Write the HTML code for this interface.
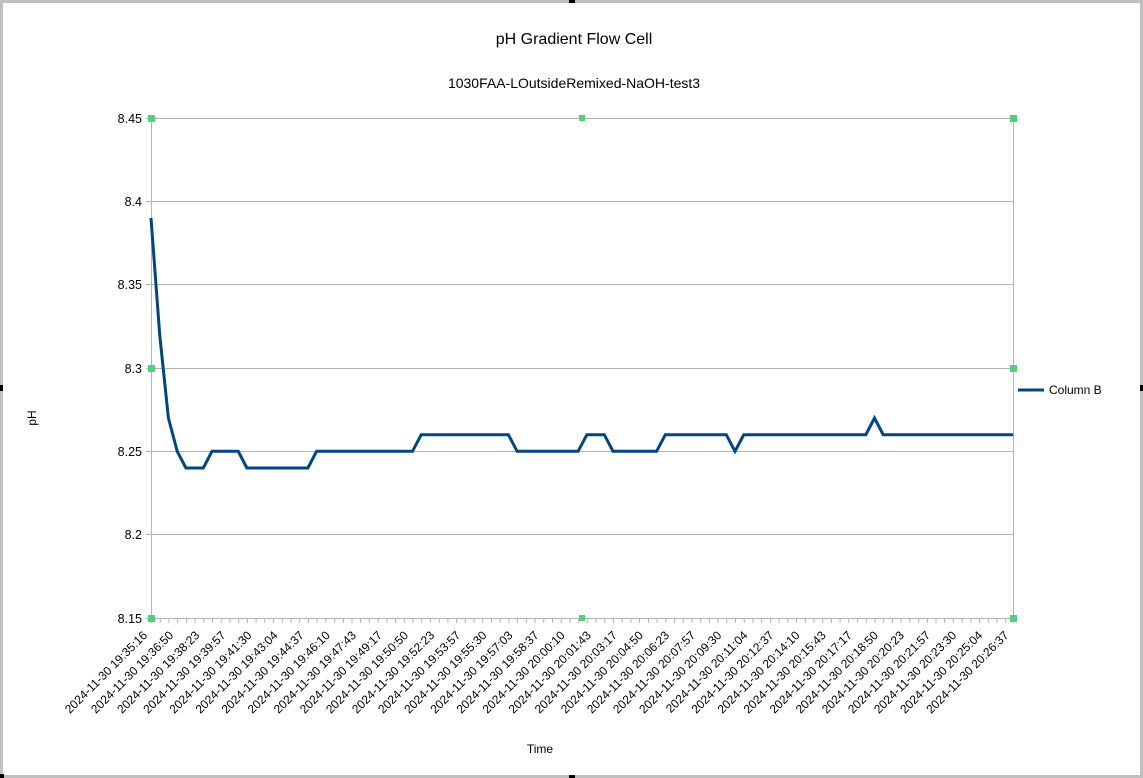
<!DOCTYPE html>
<html><head><meta charset="utf-8"><style>
html,body{margin:0;padding:0;background:#fff;}
svg{display:block;font-family:"Liberation Sans",sans-serif;}
</style></head><body>
<svg width="1143" height="778" viewBox="0 0 1143 778" xmlns="http://www.w3.org/2000/svg">
<rect x="0" y="0" width="1143" height="778" fill="#fff"/>
<rect x="1.5" y="1.5" width="1140" height="775" fill="none" stroke="#c0c0c0" stroke-width="3"/>
<rect x="0" y="385" width="3" height="6" fill="#000"/>
<rect x="1140" y="385" width="3" height="6" fill="#000"/>
<rect x="569" y="0" width="6" height="3" fill="#000"/>
<rect x="569" y="775" width="6" height="3" fill="#000"/>
<rect x="0" y="774" width="4" height="4" fill="#000"/>
<text x="574" y="44" font-size="16" text-anchor="middle" fill="#000">pH Gradient Flow Cell</text>
<text x="574" y="88" font-size="14" text-anchor="middle" fill="#000">1030FAA-LOutsideRemixed-NaOH-test3</text>
<g stroke="#b3b3b3" stroke-width="1">
<line x1="151" y1="118.5" x2="1013" y2="118.5"/>
<line x1="151" y1="201.5" x2="1013" y2="201.5"/>
<line x1="151" y1="284.5" x2="1013" y2="284.5"/>
<line x1="151" y1="368.5" x2="1013" y2="368.5"/>
<line x1="151" y1="451.5" x2="1013" y2="451.5"/>
<line x1="151" y1="534.5" x2="1013" y2="534.5"/>
<line x1="146" y1="618.5" x2="1013" y2="618.5"/>
<line x1="151.5" y1="118" x2="151.5" y2="618"/>
<line x1="1013.5" y1="118" x2="1013.5" y2="623"/>
<line x1="146" y1="118.5" x2="151" y2="118.5"/>
<line x1="146" y1="201.5" x2="151" y2="201.5"/>
<line x1="146" y1="284.5" x2="151" y2="284.5"/>
<line x1="146" y1="368.5" x2="151" y2="368.5"/>
<line x1="146" y1="451.5" x2="151" y2="451.5"/>
<line x1="146" y1="534.5" x2="151" y2="534.5"/>
</g>
<path stroke="#b3b3b3" stroke-width="1" fill="none" d="M151.5 618v5M160.2 618v5M168.9 618v5M177.7 618v5M186.4 618v5M195.1 618v5M203.8 618v5M212.5 618v5M221.2 618v5M230 618v5M238.7 618v5M247.4 618v5M256.1 618v5M264.8 618v5M273.5 618v5M282.3 618v5M291 618v5M299.7 618v5M308.4 618v5M317.1 618v5M325.8 618v5M334.6 618v5M343.3 618v5M352 618v5M360.7 618v5M369.4 618v5M378.1 618v5M386.9 618v5M395.6 618v5M404.3 618v5M413 618v5M421.7 618v5M430.4 618v5M439.2 618v5M447.9 618v5M456.6 618v5M465.3 618v5M474 618v5M482.7 618v5M491.5 618v5M500.2 618v5M508.9 618v5M517.6 618v5M526.3 618v5M535 618v5M543.8 618v5M552.5 618v5M561.2 618v5M569.9 618v5M578.6 618v5M587.3 618v5M596.1 618v5M604.8 618v5M613.5 618v5M622.2 618v5M630.9 618v5M639.6 618v5M648.4 618v5M657.1 618v5M665.8 618v5M674.5 618v5M683.2 618v5M691.9 618v5M700.7 618v5M709.4 618v5M718.1 618v5M726.8 618v5M735.5 618v5M744.2 618v5M753 618v5M761.7 618v5M770.4 618v5M779.1 618v5M787.8 618v5M796.5 618v5M805.3 618v5M814 618v5M822.7 618v5M831.4 618v5M840.1 618v5M848.8 618v5M857.6 618v5M866.3 618v5M875 618v5M883.7 618v5M892.4 618v5M901.1 618v5M909.9 618v5M918.6 618v5M927.3 618v5M936 618v5M944.7 618v5M953.4 618v5M962.2 618v5M970.9 618v5M979.6 618v5M988.3 618v5M997 618v5M1005.7 618v5"/>
<g font-size="12.5" text-anchor="end" fill="#000">
<text x="142" y="123">8.45</text>
<text x="142" y="206">8.4</text>
<text x="142" y="289">8.35</text>
<text x="142" y="373">8.3</text>
<text x="142" y="456">8.25</text>
<text x="142" y="539">8.2</text>
<text x="142" y="623">8.15</text>
</g>
<text transform="translate(36,418) rotate(-90)" font-size="12" text-anchor="middle">pH</text>
<text x="540" y="753" font-size="12" text-anchor="middle">Time</text>
<polyline fill="none" stroke="#004586" stroke-width="3" stroke-linejoin="miter" points="151,218 159.7,334.7 168.4,418 177.2,451.3 185.9,468 203.3,468 212,451.3 238.2,451.3 246.9,468 307.9,468 316.6,451.3 412.5,451.3 421.2,434.7 508.4,434.7 517.1,451.3 578.1,451.3 586.9,434.7 604.3,434.7 613,451.3 656.6,451.3 665.3,434.7 726.3,434.7 735,451.3 743.8,434.7 865.8,434.7 874.5,418 883.2,434.7 1013,434.7"/>
<g fill="#4fd07a">
<rect x="148" y="115" width="7" height="7"/>
<rect x="579" y="115" width="6" height="6"/>
<rect x="1010" y="115" width="7" height="7"/>
<rect x="148" y="365" width="7" height="7"/>
<rect x="1010" y="365" width="7" height="7"/>
<rect x="148" y="615" width="7" height="7"/>
<rect x="579" y="615" width="6" height="6"/>
<rect x="1010" y="615" width="7" height="7"/>
</g>
<line x1="1018" y1="390" x2="1044" y2="390" stroke="#004586" stroke-width="3"/>
<text x="1049" y="394" font-size="12">Column B</text>
<g font-size="12" text-anchor="end" fill="#000">
<text transform="translate(148,636) rotate(-45)">2024-11-30 19:35:16</text>
<text transform="translate(174.1,636) rotate(-45)">2024-11-30 19:36:50</text>
<text transform="translate(200.2,636) rotate(-45)">2024-11-30 19:38:23</text>
<text transform="translate(226.3,636) rotate(-45)">2024-11-30 19:39:57</text>
<text transform="translate(252.4,636) rotate(-45)">2024-11-30 19:41:30</text>
<text transform="translate(278.5,636) rotate(-45)">2024-11-30 19:43:04</text>
<text transform="translate(304.6,636) rotate(-45)">2024-11-30 19:44:37</text>
<text transform="translate(330.7,636) rotate(-45)">2024-11-30 19:46:10</text>
<text transform="translate(356.8,636) rotate(-45)">2024-11-30 19:47:43</text>
<text transform="translate(382.9,636) rotate(-45)">2024-11-30 19:49:17</text>
<text transform="translate(409,636) rotate(-45)">2024-11-30 19:50:50</text>
<text transform="translate(435.1,636) rotate(-45)">2024-11-30 19:52:23</text>
<text transform="translate(461.2,636) rotate(-45)">2024-11-30 19:53:57</text>
<text transform="translate(487.3,636) rotate(-45)">2024-11-30 19:55:30</text>
<text transform="translate(513.4,636) rotate(-45)">2024-11-30 19:57:03</text>
<text transform="translate(539.5,636) rotate(-45)">2024-11-30 19:58:37</text>
<text transform="translate(565.6,636) rotate(-45)">2024-11-30 20:00:10</text>
<text transform="translate(591.7,636) rotate(-45)">2024-11-30 20:01:43</text>
<text transform="translate(617.8,636) rotate(-45)">2024-11-30 20:03:17</text>
<text transform="translate(643.9,636) rotate(-45)">2024-11-30 20:04:50</text>
<text transform="translate(670,636) rotate(-45)">2024-11-30 20:06:23</text>
<text transform="translate(696.1,636) rotate(-45)">2024-11-30 20:07:57</text>
<text transform="translate(722.2,636) rotate(-45)">2024-11-30 20:09:30</text>
<text transform="translate(748.3,636) rotate(-45)">2024-11-30 20:11:04</text>
<text transform="translate(774.4,636) rotate(-45)">2024-11-30 20:12:37</text>
<text transform="translate(800.5,636) rotate(-45)">2024-11-30 20:14:10</text>
<text transform="translate(826.6,636) rotate(-45)">2024-11-30 20:15:43</text>
<text transform="translate(852.7,636) rotate(-45)">2024-11-30 20:17:17</text>
<text transform="translate(878.8,636) rotate(-45)">2024-11-30 20:18:50</text>
<text transform="translate(904.9,636) rotate(-45)">2024-11-30 20:20:23</text>
<text transform="translate(931,636) rotate(-45)">2024-11-30 20:21:57</text>
<text transform="translate(957.1,636) rotate(-45)">2024-11-30 20:23:30</text>
<text transform="translate(983.2,636) rotate(-45)">2024-11-30 20:25:04</text>
<text transform="translate(1009.3,636) rotate(-45)">2024-11-30 20:26:37</text>
</g>
</svg>
</body></html>
